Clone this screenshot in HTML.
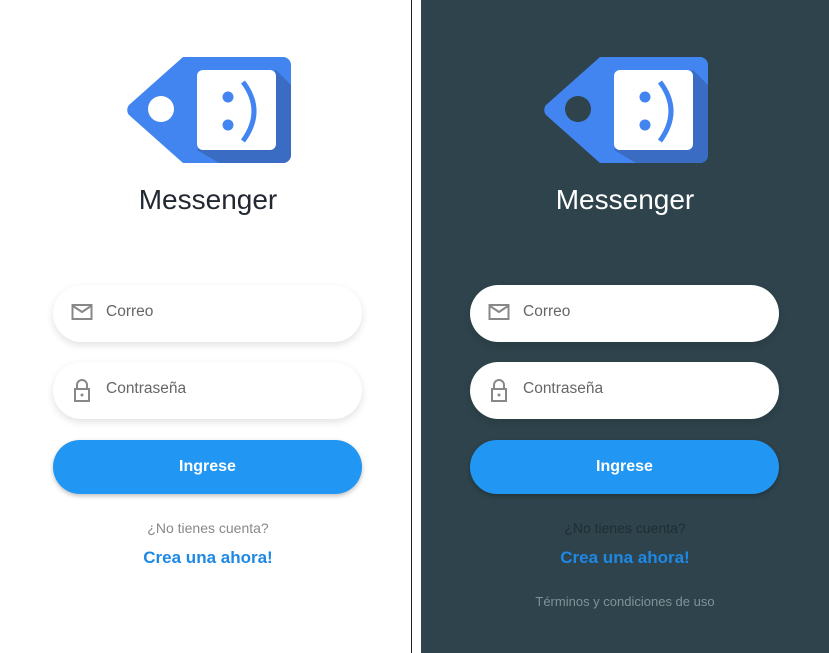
<!DOCTYPE html>
<html><head><meta charset="utf-8"><style>
body{margin:0;width:829px;height:653px;position:relative;overflow:hidden;background:#fff;font-family:"Liberation Sans",Roboto,sans-serif}
.panel{position:absolute;top:0;width:411px;height:653px}
.logo{position:absolute;left:125px;top:57px}
.title{position:absolute;left:0;width:416px;top:184px;text-align:center;font-size:28px;color:#222831}
.inp{position:absolute;left:53px;width:309px;height:57px;border-radius:29px;background:#fff;box-shadow:0 3px 8px rgba(0,0,0,.12)}
.inp span{position:absolute;left:53px;top:18px;font-size:15.5px;color:#666}
.inp svg{position:absolute;left:18px;top:17px}
.btn{position:absolute;left:53px;top:440px;width:309px;height:54px;border-radius:27px;background:#2196f3;color:#fff;font-weight:bold;font-size:16px;text-align:center;line-height:54px;box-shadow:0 2px 5px rgba(0,0,0,.25)}
.q{position:absolute;left:0;width:416px;top:520px;text-align:center;font-size:14px;color:#888}
.l{position:absolute;left:0;width:416px;top:548px;text-align:center;font-size:17px;font-weight:bold;color:#1e88e5}
</style></head><body>
<div style="position:absolute;left:411px;top:0;width:1px;height:653px;background:#222"></div>
<div style="position:absolute;left:421px;top:0;width:408px;height:653px;background:#2e434b"></div>

<div class="panel" style="left:0">
<svg class="logo" width="166" height="106" viewBox="0 0 166 106">
<path d="M58 0H158a8 8 0 0 1 8 8V98a8 8 0 0 1-8 8H58L4 58a8 8 0 0 1 0-10Z" fill="#4285f0"/>
<path d="M151 13L166 28V98a8 8 0 0 1-8 8H94L72 93Z" fill="#3a6cc4"/>
<circle cx="36" cy="52" r="13" fill="#fff"/>
<rect x="72" y="13" width="79" height="80" rx="6" fill="#fff"/>
<circle cx="103" cy="40" r="5.5" fill="#4285f0"/><circle cx="103" cy="68" r="5.5" fill="#4285f0"/>
<path d="M118 25Q140 54 118 84" stroke="#4285f0" stroke-width="5" fill="none"/>
</svg>
<div class="title">Messenger</div>
<div class="inp" style="top:285px"><svg width="22" height="20" viewBox="0 0 22 20"><rect x="1.5" y="3" width="19" height="14" fill="none" stroke="#888" stroke-width="2"/><path d="M2 4l9 6 9-6" fill="none" stroke="#888" stroke-width="2"/></svg><span>Correo</span></div>
<div class="inp" style="top:362px"><svg width="22" height="24" viewBox="0 0 22 24"><path d="M6 10V6a5 5 0 0 1 10 0v4" fill="none" stroke="#888" stroke-width="2"/><rect x="4" y="10" width="14" height="12" fill="none" stroke="#888" stroke-width="2"/><circle cx="11" cy="16" r="1.5" fill="#888"/></svg><span>Contraseña</span></div>
<div class="btn">Ingrese</div>
<div class="q">¿No tienes cuenta?</div>
<div class="l">Crea una ahora!</div>
</div>

<div class="panel" style="left:417px">
<svg class="logo" width="166" height="106" viewBox="0 0 166 106">
<path d="M58 0H158a8 8 0 0 1 8 8V98a8 8 0 0 1-8 8H58L4 58a8 8 0 0 1 0-10Z" fill="#4285f0"/>
<path d="M151 13L166 28V98a8 8 0 0 1-8 8H94L72 93Z" fill="#3a6cc4"/>
<circle cx="36" cy="52" r="13" fill="#2e434b"/>
<rect x="72" y="13" width="79" height="80" rx="6" fill="#fff"/>
<circle cx="103" cy="40" r="5.5" fill="#4285f0"/><circle cx="103" cy="68" r="5.5" fill="#4285f0"/>
<path d="M118 25Q140 54 118 84" stroke="#4285f0" stroke-width="5" fill="none"/>
</svg>
<div class="title" style="color:#fff">Messenger</div>
<div class="inp" style="top:285px"><svg width="22" height="20" viewBox="0 0 22 20"><rect x="1.5" y="3" width="19" height="14" fill="none" stroke="#888" stroke-width="2"/><path d="M2 4l9 6 9-6" fill="none" stroke="#888" stroke-width="2"/></svg><span>Correo</span></div>
<div class="inp" style="top:362px"><svg width="22" height="24" viewBox="0 0 22 24"><path d="M6 10V6a5 5 0 0 1 10 0v4" fill="none" stroke="#888" stroke-width="2"/><rect x="4" y="10" width="14" height="12" fill="none" stroke="#888" stroke-width="2"/><circle cx="11" cy="16" r="1.5" fill="#888"/></svg><span>Contraseña</span></div>
<div class="btn">Ingrese</div>
<div class="q" style="color:#1f2d33">¿No tienes cuenta?</div>
<div class="l">Crea una ahora!</div>
<div class="q" style="top:594px;font-size:13px;color:#7f9399">Términos y condiciones de uso</div>
</div>
</body></html>
